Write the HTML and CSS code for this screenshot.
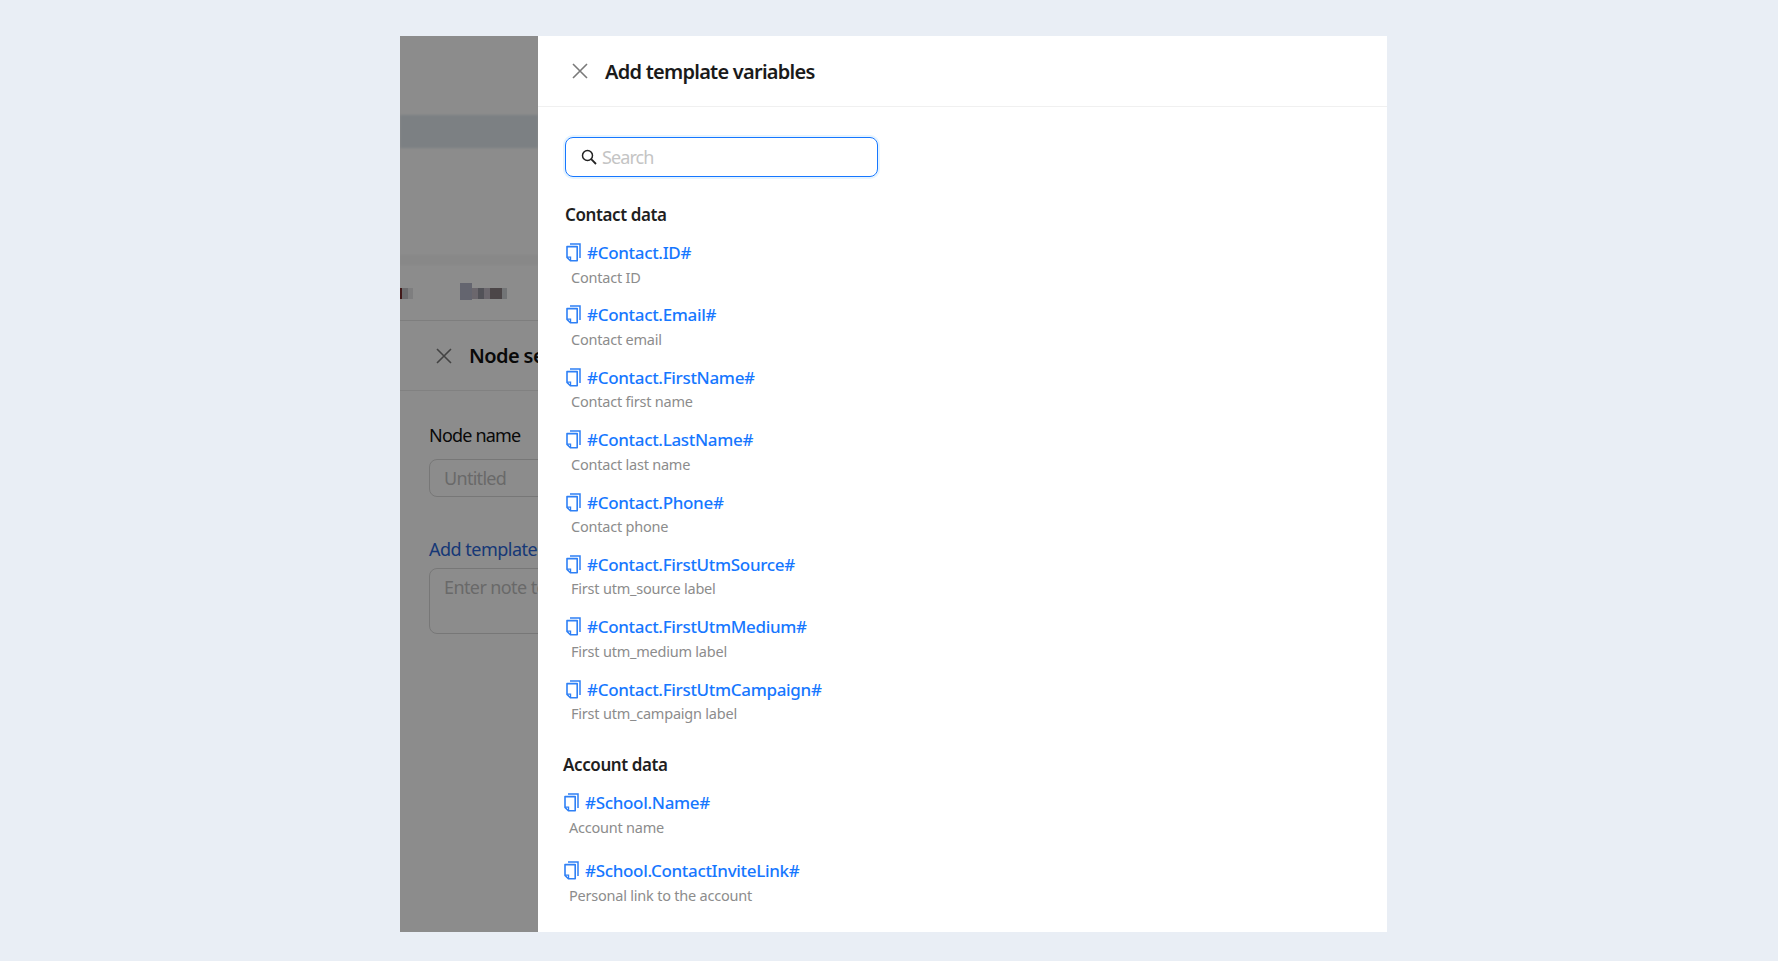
FILE: index.html
```html
<!DOCTYPE html>
<html lang="en">
<head>
<meta charset="UTF-8" />
<meta name="viewport" content="width=device-width, initial-scale=1.0" />
<title>Add template variables</title>
<link rel="stylesheet" href="styles.css">
</head>
<body>

<svg width="0" height="0" class="sprite">
  <symbol id="copy" viewBox="0 0 15 19">
    <path d="M4 1H14V15" fill="none" stroke="currentColor" stroke-width="1.5"/>
    <path d="M1 3.6H11.2V17.8H4.4L1 14.4Z" fill="none" stroke="currentColor" stroke-width="1.6" stroke-linejoin="round"/>
    <path d="M1 14.2H4.6V17.8" fill="none" stroke="currentColor" stroke-width="1.2"/>
  </symbol>
  <symbol id="close" viewBox="0 0 16 16">
    <path d="M1 1L15 15M15 1L1 15" fill="none" stroke="currentColor" stroke-width="1.6"/>
  </symbol>
</svg>

<div class="frame">

  <!-- page behind the drawer, dimmed -->
  <div class="behind">
    <div class="band-top"></div>
    <div class="band-thin"></div>
    <div class="blur-row">
      <svg width="138" height="17" viewBox="0 0 138 17">
        <rect x="0" y="5" width="2" height="11" fill="#7a3030"/>
        <rect x="2" y="5" width="6" height="11" fill="#55555f" fill-opacity=".35"/>
        <rect x="8" y="5" width="5" height="11" fill="#55555f" fill-opacity=".15"/>
        <rect x="60" y="0" width="12" height="17" fill="#6f7396" fill-opacity=".5"/>
        <rect x="72" y="5" width="6" height="11" fill="#7a6a80" fill-opacity=".45"/>
        <rect x="78" y="5" width="6" height="11" fill="#4f4f60" fill-opacity=".6"/>
        <rect x="84" y="5" width="6" height="11" fill="#7a6a80" fill-opacity=".45"/>
        <rect x="90" y="5" width="12" height="11" fill="#5a4a50" fill-opacity=".7"/>
        <rect x="102" y="5" width="5" height="11" fill="#9fa8b0" fill-opacity=".5"/>
      </svg>
    </div>
    <div class="node-panel">
      <div class="node-head">
        <svg class="icon-close"><use href="#close"/></svg>
        <span class="node-title">Node settings</span>
      </div>
      <div class="node-body">
        <label class="node-label">Node name</label>
        <div class="node-input">Untitled</div>
        <a class="node-link">Add template variables</a>
        <div class="node-area">Enter note text</div>
      </div>
    </div>
    <div class="dim"></div>
  </div>

  <div class="drawer">
    <div class="drawer-head">
      <svg class="icon-close"><use href="#close"/></svg>
      <span class="drawer-title">Add template variables</span>
    </div>
    <div class="drawer-body">
      <div class="search">
        <svg class="icon-search" viewBox="0 0 16 16"><circle cx="6.5" cy="6.5" r="5" fill="none" stroke="currentColor" stroke-width="1.5"/><path d="M10.2 10.2L15 15" fill="none" stroke="currentColor" stroke-width="1.8"/></svg>
        <span class="placeholder">Search</span>
      </div>

      <section class="group">
        <h3>Contact data</h3>
        <div class="var"><a><svg class="icon-copy"><use href="#copy"/></svg>#Contact.ID#</a><p>Contact ID</p></div>
        <div class="var"><a><svg class="icon-copy"><use href="#copy"/></svg>#Contact.Email#</a><p>Contact email</p></div>
        <div class="var"><a><svg class="icon-copy"><use href="#copy"/></svg>#Contact.FirstName#</a><p>Contact first name</p></div>
        <div class="var"><a><svg class="icon-copy"><use href="#copy"/></svg>#Contact.LastName#</a><p>Contact last name</p></div>
        <div class="var"><a><svg class="icon-copy"><use href="#copy"/></svg>#Contact.Phone#</a><p>Contact phone</p></div>
        <div class="var"><a><svg class="icon-copy"><use href="#copy"/></svg>#Contact.FirstUtmSource#</a><p>First utm_source label</p></div>
        <div class="var"><a><svg class="icon-copy"><use href="#copy"/></svg>#Contact.FirstUtmMedium#</a><p>First utm_medium label</p></div>
        <div class="var"><a><svg class="icon-copy"><use href="#copy"/></svg>#Contact.FirstUtmCampaign#</a><p>First utm_campaign label</p></div>
      </section>

      <section class="group group-account">
        <h3>Account data</h3>
        <div class="var var-wide"><a><svg class="icon-copy"><use href="#copy"/></svg>#School.Name#</a><p>Account name</p></div>
        <div class="var var-wide"><a><svg class="icon-copy"><use href="#copy"/></svg>#School.ContactInviteLink#</a><p>Personal link to the account</p></div>
      </section>
    </div>
  </div>

</div>

</body>
</html>
```

FILE: styles.css
```css
:root {
  --blue: #1677ff;
  --font-body: "Noto Sans", "Open Sans", sans-serif;
}

* { box-sizing: border-box; }

body {
  margin: 0;
  height: 100vh;
  overflow: hidden;
  background: #e9eef5;
  font-family: var(--font-body);
  padding: 36px 391px 29px 400px;
  color: #1f1f1f;
}

.sprite { position: absolute; }

.frame {
  display: flex;
  height: 100%;
}

/* left part, page under the overlay */
.behind {
  position: relative;
  width: 138px;
  flex: none;
  overflow: hidden;
  background: #fff;
  padding-top: 79px;
}
.dim {
  position: absolute;
  inset: 0;
  background: rgba(0,0,0,0.45);
}

.band-top { height: 33px; background: #e2e9ef; filter: blur(1px); }
.band-thin { height: 10px; margin-top: 107px; background: #f7f7f7; filter: blur(1px); }
.blur-row { height: 17px; margin-top: 18px; }
.blur-row svg { display: block; }

.node-panel {
  margin-top: 20px;
  width: 500px;
  border-top: 1px solid #e6e6e6;
}
.node-head {
  display: flex;
  align-items: center;
  gap: 17px;
  height: 70px;
  padding-left: 36px;
  border-bottom: 1px solid #ececec;
}
.node-title { font-size: 20px; font-weight: 600; letter-spacing: -0.6px; color: #111; }

.node-body { padding: 32px 0 0 29px; }
.node-label { display: block; font-size: 18px; line-height: 24px; letter-spacing: -0.8px; color: #111; }
.node-input {
  width: 400px;
  height: 38px;
  margin-top: 12px;
  padding-left: 14px;
  border: 1px solid #d9d9d9;
  border-radius: 8px;
  font-size: 18px;
  line-height: 36px;
  letter-spacing: -0.7px;
  color: #bfbfbf;
}
.node-link {
  display: block;
  margin-top: 40px;
  font-size: 18px;
  line-height: 24px;
  letter-spacing: -0.5px;
  color: #2a66d8;
}
.node-area {
  width: 400px;
  height: 66px;
  margin-top: 7px;
  padding: 6px 14px;
  border: 1px solid #d9d9d9;
  border-radius: 8px;
  font-size: 18px;
  line-height: 24px;
  letter-spacing: -0.6px;
  color: #bfbfbf;
}

/* drawer */
.drawer {
  flex: 1;
  background: #fff;
  display: flex;
  flex-direction: column;
}
.drawer-head {
  flex: none;
  display: flex;
  align-items: center;
  gap: 17px;
  height: 71px;
  padding-left: 34px;
  border-bottom: 1px solid #f0f0f0;
}
.icon-close { width: 16px; height: 16px; flex: none; color: #7a7a7a; }
.drawer-title { font-size: 20px; font-weight: 600; letter-spacing: -0.75px; color: #1a1a1a; }

.drawer-body { padding: 30px 27px 0; }

.search {
  display: flex;
  align-items: center;
  gap: 5px;
  width: 313px;
  height: 40px;
  padding-left: 15px;
  border: 1px solid var(--blue);
  border-radius: 8px;
  box-shadow: 0 0 0 2px rgba(5,145,255,0.1);
}
.icon-search { width: 16px; height: 16px; color: #222; }
.placeholder { font-size: 18px; letter-spacing: -0.9px; color: #c4c4c4; }

.group { margin-top: 24px; }
.group h3 {
  margin: 0 0 11.5px;
  font-size: 17px;
  line-height: 28px;
  font-weight: 600;
  letter-spacing: -0.4px;
  color: #1f1f1f;
}

.var { height: 62.4px; }
.var a {
  display: flex;
  align-items: center;
  gap: 6px;
  height: 24px;
  font-size: 17px;
  font-weight: 500;
  letter-spacing: -0.32px;
  color: var(--blue);
}
.icon-copy { width: 15px; height: 19px; flex: none; margin-left: 1px; color: #2f80f5; }
.var p {
  margin: 0;
  padding-left: 6px;
  font-size: 14.5px;
  line-height: 24px;
  letter-spacing: -0.22px;
  color: #8c8c8c;
}

.group-account { margin-top: 11.5px; margin-left: -2px; }
.group-account .var-wide { height: 68px; }
```
